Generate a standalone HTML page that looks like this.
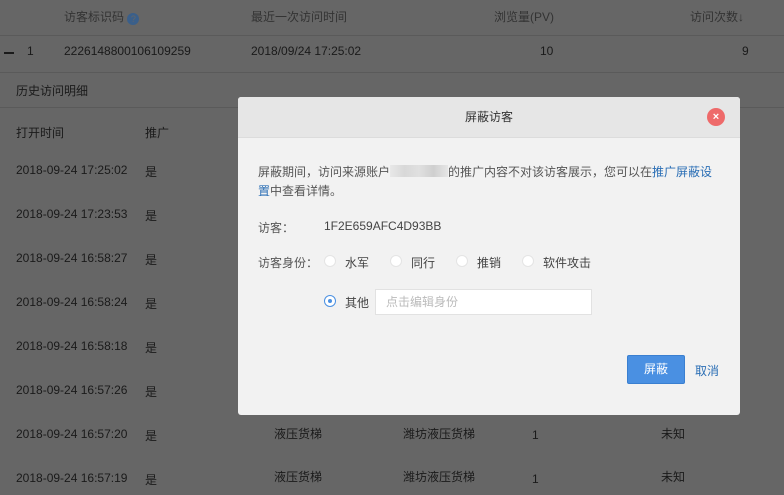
<!DOCTYPE html>
<html><head><meta charset="utf-8"><style>
*{margin:0;padding:0;box-sizing:border-box}
body{width:784px;height:495px;overflow:hidden;background:#666;font-family:"Liberation Sans","Noto Sans CJK SC",sans-serif;font-size:12px;color:#1a1a1a;position:relative}
.t{position:absolute;white-space:nowrap}
.h{color:#333}
.line{position:absolute;left:0;width:784px;height:1px;background:#5a5a5a}
.modal{position:absolute;left:238px;top:97px;width:502px;height:318px;background:#f2f2f2;border-radius:3px;overflow:hidden}
.mh{height:41px;background:#e6e6e6;border-bottom:1px solid #dcdcdc;text-align:center;line-height:41px;font-size:12px;color:#333}
.close{position:absolute;left:469px;top:11px;width:18px;height:18px;border-radius:50%;background:#ee6a6a;color:#fff;font-size:11px;line-height:18px;text-align:center;font-weight:bold}
.m{position:absolute;color:#555;font-size:12px;white-space:nowrap}
.r{position:absolute;width:12px;height:12px;border-radius:50%;background:#fff;border:1px solid #e4e4e4}
.rc{border:1px solid #4a90e2;}
.rc::after{content:"";position:absolute;left:3px;top:3px;width:4px;height:4px;border-radius:50%;background:#4a90e2}
</style></head><body>
<div class="t h" style="left:64px;top:8px">访客标识码 <span style="display:inline-block;width:12px;height:12px;border-radius:50%;background:#3a5f8a;color:#666;font-size:9px;text-align:center;line-height:12px;vertical-align:-1px">?</span></div>
<div class="t h" style="left:251px;top:8px">最近一次访问时间</div>
<div class="t h" style="left:494px;top:8px">浏览量(PV)</div>
<div class="t h" style="left:690px;top:8px">访问次数<b>↓</b></div>
<div class="line" style="top:35px"></div>
<div style="position:absolute;left:4px;top:52px;width:10px;height:2px;background:#1a1a1a"></div>
<div class="t" style="left:27px;top:44px">1</div>
<div class="t" style="left:64px;top:44px">2226148800106109259</div>
<div class="t" style="left:251px;top:44px">2018/09/24 17:25:02</div>
<div class="t" style="left:540px;top:44px">10</div>
<div class="t" style="left:742px;top:44px">9</div>
<div class="line" style="top:72px"></div>
<div class="t" style="left:16px;top:82px">历史访问明细</div>
<div class="line" style="top:107px"></div>
<div class="t" style="left:16px;top:124px">打开时间</div>
<div class="t" style="left:145px;top:124px">推广</div>
<div class="t" style="left:16px;top:163px">2018-09-24 17:25:02</div><div class="t" style="left:145px;top:163px">是</div>
<div class="t" style="left:16px;top:207px">2018-09-24 17:23:53</div><div class="t" style="left:145px;top:207px">是</div>
<div class="t" style="left:16px;top:251px">2018-09-24 16:58:27</div><div class="t" style="left:145px;top:251px">是</div>
<div class="t" style="left:16px;top:295px">2018-09-24 16:58:24</div><div class="t" style="left:145px;top:295px">是</div>
<div class="t" style="left:16px;top:339px">2018-09-24 16:58:18</div><div class="t" style="left:145px;top:339px">是</div>
<div class="t" style="left:16px;top:383px">2018-09-24 16:57:26</div><div class="t" style="left:145px;top:383px">是</div>
<div class="t" style="left:16px;top:427px">2018-09-24 16:57:20</div><div class="t" style="left:145px;top:427px">是</div>
<div class="t" style="left:274px;top:425px">液压货梯</div><div class="t" style="left:403px;top:425px">潍坊液压货梯</div><div class="t" style="left:532px;top:428px">1</div><div class="t" style="left:661px;top:425px">未知</div>
<div class="t" style="left:16px;top:471px">2018-09-24 16:57:19</div><div class="t" style="left:145px;top:471px">是</div>
<div class="t" style="left:274px;top:468px">液压货梯</div><div class="t" style="left:403px;top:468px">潍坊液压货梯</div><div class="t" style="left:532px;top:472px">1</div><div class="t" style="left:661px;top:468px">未知</div>

<div class="modal">
<div class="mh">屏蔽访客</div>
<div class="close">×</div>
<div class="m" style="left:20px;top:66px;line-height:19px;white-space:normal;width:458px;word-break:break-all">屏蔽期间，访问来源账户<span style="display:inline-block;width:58px;height:12px;background:linear-gradient(90deg,#e8e8e8,#d8d8d8,#e0e0e0,#cfcfcf,#e6e6e6);vertical-align:-1px"></span>的推广内容不对该访客展示，您可以在<span style="color:#2a6eb5">推广屏蔽设置</span>中查看详情。</div>
<div class="m" style="left:20px;top:122px">访客：</div>
<div class="m" style="left:86px;top:122px;color:#444">1F2E659AFC4D93BB</div>
<div class="m" style="left:20px;top:157px">访客身份：</div>
<div class="r" style="left:86px;top:158px"></div><div class="m" style="left:107px;top:157px;color:#444">水军</div>
<div class="r" style="left:152px;top:158px"></div><div class="m" style="left:173px;top:157px;color:#444">同行</div>
<div class="r" style="left:218px;top:158px"></div><div class="m" style="left:239px;top:157px;color:#444">推销</div>
<div class="r" style="left:284px;top:158px"></div><div class="m" style="left:305px;top:157px;color:#444">软件攻击</div>
<div class="r rc" style="left:86px;top:198px"></div><div class="m" style="left:107px;top:197px;color:#444">其他</div>
<div style="position:absolute;left:137px;top:192px;width:217px;height:26px;background:#fff;border:1px solid #e2e2e2;color:#bbb;padding-left:10px;line-height:24px">点击编辑身份</div>
<div style="position:absolute;left:389px;top:258px;width:58px;height:29px;background:#4a90e2;border:1px solid #3a7fd0;border-radius:2px;color:#fff;text-align:center;line-height:27px">屏蔽</div>
<div class="m" style="left:457px;top:265px;color:#2a6eb5">取消</div>
</div>
</body></html>
